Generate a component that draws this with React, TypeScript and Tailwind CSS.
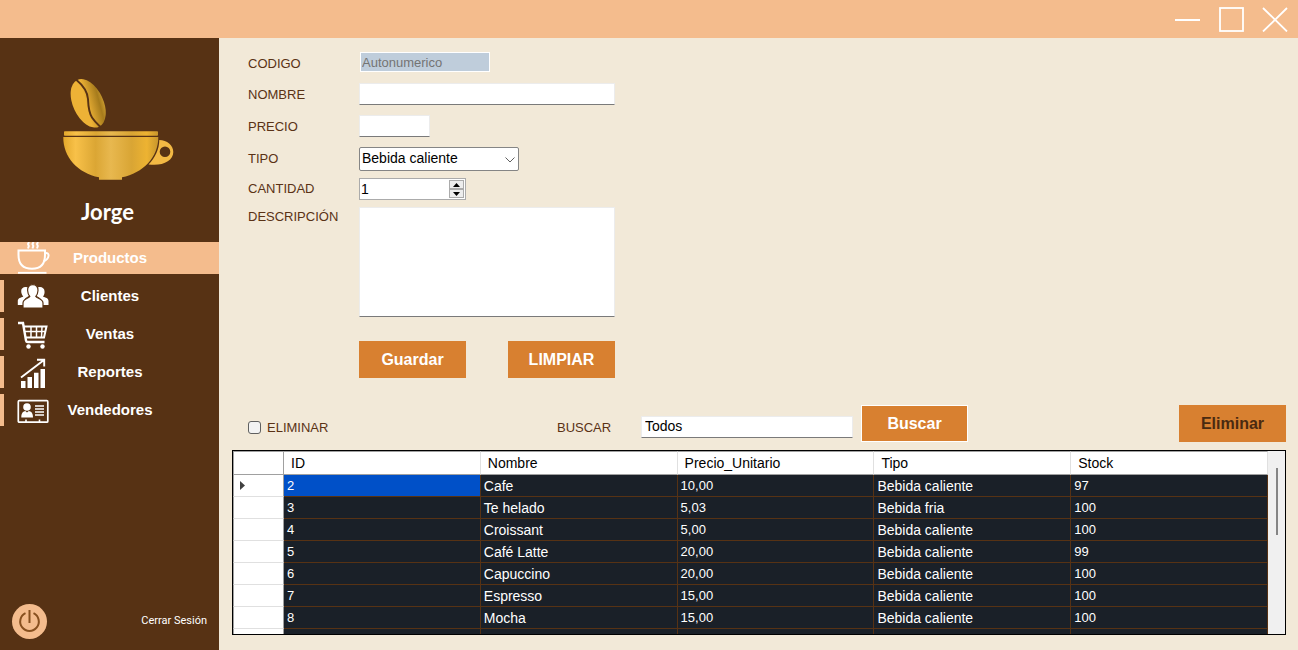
import React, { useState } from "react";

type Product = {
  id: string;
  nombre: string;
  precio: string;
  tipo: string;
  stock: string;
};

const products: Product[] = [
  { id: "2", nombre: "Cafe", precio: "10,00", tipo: "Bebida caliente", stock: "97" },
  { id: "3", nombre: "Te helado", precio: "5,03", tipo: "Bebida fria", stock: "100" },
  { id: "4", nombre: "Croissant", precio: "5,00", tipo: "Bebida caliente", stock: "100" },
  { id: "5", nombre: "Café Latte", precio: "20,00", tipo: "Bebida caliente", stock: "99" },
  { id: "6", nombre: "Capuccino", precio: "20,00", tipo: "Bebida caliente", stock: "100" },
  { id: "7", nombre: "Espresso", precio: "15,00", tipo: "Bebida caliente", stock: "100" },
  { id: "8", nombre: "Mocha", precio: "15,00", tipo: "Bebida caliente", stock: "100" },
  { id: "", nombre: "", precio: "", tipo: "", stock: "" },
];

const columns = ["ID", "Nombre", "Precio_Unitario", "Tipo", "Stock"];

function Logo() {
  return (
    <svg viewBox="60 75 116 108" className="h-[108px] w-[116px]" aria-hidden="true">
      <defs>
        <linearGradient id="cup" x1="0" x2="1" y1="0" y2="0">
          <stop offset="0" stopColor="#e3a82c" />
          <stop offset="0.13" stopColor="#f8c149" />
          <stop offset="0.34" stopColor="#dba634" />
          <stop offset="0.5" stopColor="#e8b84f" />
          <stop offset="0.72" stopColor="#d9a534" />
          <stop offset="0.88" stopColor="#edb332" />
          <stop offset="1" stopColor="#c8962c" />
        </linearGradient>
        <linearGradient id="bean" x1="0" x2="1" y1="0.3" y2="0.6">
          <stop offset="0.45" stopColor="#edb236" />
          <stop offset="0.85" stopColor="#a67b1c" />
          <stop offset="1" stopColor="#c99a2e" />
        </linearGradient>
      </defs>
      <ellipse cx="88.2" cy="103.3" rx="15.2" ry="25.800" transform="rotate(-25 88.2 103.3)" fill="url(#bean)" />
      <path d="M76 79.500C82 84.500 87.500 91.500 88 99C88.300 106 88.500 112 92 117.500C95 122 98 124.500 101 127.500" fill="none" stroke="#573214" strokeWidth="1.900" />
      <rect x="64" y="131.300" width="94" height="4.400" rx="0.800" fill="url(#cup)" />
      <path d="M63.300 136.900H158.300C158.500 157 143 173 122 177.300V179.800H99V177.300C78 173 63 157 63.300 136.900Z" fill="url(#cup)" />
      <path fillRule="evenodd" d="M159.300 140C167 140 173.300 145 173.300 152C173.300 161 162 166.500 148.500 164.400C155 158 159.300 149 159.300 140ZM170.300 151.700A5.300 5.300 0 1 0 159.700 151.700A5.300 5.300 0 1 0 170.300 151.700Z" fill="#f3b944" />
    </svg>
  );
}

function Icon({ children }: { children: React.ReactNode }) {
  return (
    <svg viewBox="0 0 34 34" className="h-[34px] w-[34px] shrink-0" fill="none" stroke="#fff" aria-hidden="true">
      {children}
    </svg>
  );
}

const CoffeeIcon = () => (
  <Icon>
    <path d="M1.500 9.500H28V14C28 23 23.500 27.800 15 27.800S1.500 23 1.500 14Z" strokeWidth="2" />
    <path d="M28 12C33 11 33 17.500 26.500 20.500" strokeWidth="2" />
    <path d="M1 31.800H29.500" strokeWidth="1.800" />
    <path d="M12 1L11 3L11.800 5L11 7.500M16.500 1L15.500 3L16.300 5L15.500 7.500M21 1L20 3L20.800 5L20 7.500" strokeWidth="2" />
  </Icon>
);

const PeopleIcon = () => (
  <Icon>
    <g fill="#fff" stroke="none">
      <path d="M8.500 8C11 7.800 11.800 9 11.500 11C11.300 13 11.700 15 12.500 16.500C10 18 7 19.500 6 22.800V26H0.800V22C0.800 19 4 18.800 6.300 17.500C4.800 15.800 4.200 14 4.200 12C4.200 9.500 6 8.200 8.500 8Z" />
      <path d="M23 8C20.500 7.800 19.700 9 20 11C20.200 13 19.800 15 19 16.500C21.500 18 24.500 19.500 25.500 22.800V26H31.500V22C31.500 19 28.500 18.800 26 17.500C27.500 15.800 27.700 14 27.500 12C27.300 9.500 25.500 8.200 23 8Z" />
      <path d="M15.800 5.600C19.300 5.600 21.200 8 21 11.500C20.800 14.500 19.800 16.500 18.800 17.500C20.300 19.500 26 19.700 26 24V29H6V24C6 19.700 11.300 19.500 12.800 17.500C11.800 16.500 10.800 14.500 10.600 11.500C10.400 8 12.300 5.600 15.800 5.600Z" stroke="#573214" strokeWidth="1.200" />
    </g>
  </Icon>
);

const CartIcon = () => (
  <Icon>
    <path d="M1 6H6L9 23.500C9.200 24.800 9.800 25 11 25H27.500" strokeWidth="2.400" />
    <path d="M6.800 9.500H29.500L27 20.500H9" strokeWidth="2" />
    <path d="M8 14.500H28.500M14 9.500V20M19.500 9.500V20M25 9.500L24.500 20" strokeWidth="1.500" />
    <circle cx="11.500" cy="29.500" r="2.200" fill="#fff" stroke="none" />
    <circle cx="25.500" cy="29.500" r="2.200" fill="#fff" stroke="none" />
  </Icon>
);

const ReportIcon = () => (
  <Icon>
    <path d="M4 26H8.500V33H4ZM10.500 22H15V33H10.500ZM17 17.800H21.500V33H17ZM23.500 14H28V33H23.500Z" fill="#fff" stroke="none" />
    <path d="M4 22.500L27 5M20 4.700H27.200V11.500" strokeWidth="1.900" />
  </Icon>
);

const CardIcon = () => (
  <Icon>
    <rect x="1.300" y="7.700" width="29.500" height="21.500" rx="1" strokeWidth="1.700" />
    <path d="M9 29V26.500M22.500 29V26.500" strokeWidth="1.600" />
    <path d="M18 13H27M18 16H27M18 19H27M18 22H27" strokeWidth="1.300" />
    <circle cx="10" cy="14" r="3.800" fill="#fff" stroke="none" />
    <path d="M4.300 24.500C4.300 19.500 6.300 18.500 8.300 18L10 19.500L11.800 18C14 18.500 16 19.500 16 24.500Z" fill="#fff" stroke="none" />
  </Icon>
);

const nav = [
  { label: "Productos", icon: CoffeeIcon },
  { label: "Clientes", icon: PeopleIcon },
  { label: "Ventas", icon: CartIcon },
  { label: "Reportes", icon: ReportIcon },
  { label: "Vendedores", icon: CardIcon },
];

function Sidebar() {
  return (
    <aside className="flex w-[219px] shrink-0 flex-col bg-[#573214] text-white">
      <div className="flex flex-col items-center pt-[37px] pr-1">
        <div className="pl-5">
          <Logo />
        </div>
        <p className="mt-3.5 text-center font-['Lato','Liberation_Sans',sans-serif] text-[22px] leading-[30px] font-bold">Jorge</p>
      </div>
      <nav className="mt-[15px] flex flex-col gap-1.5">
        {nav.map(({ label, icon: NavIcon }, i) => (
          <a
            key={label}
            href={"#" + label.toLowerCase()}
            className={
              i === 0
                ? "flex h-8 items-center overflow-hidden border-l-4 border-[#f4bc8d] bg-[#f4bc8d] pl-[13px]"
                : "flex h-8 items-center border-l-4 border-[#f4bc8d] pl-[13px]"
            }
          >
            <NavIcon />
            <span className="w-[118px] text-center text-[15px] leading-5 font-bold">{label}</span>
          </a>
        ))}
      </nav>
      <div className="mt-auto flex items-center justify-between px-3 pb-[11px]">
        <button type="button" aria-label="Salir" className="h-[35px] w-[35px] rounded-full bg-[#f4bc8d]">
          <svg viewBox="0 0 35 35" fill="none" stroke="#87501f" strokeWidth="2" aria-hidden="true">
            <path d="M17.500 6V19" />
            <path d="M13.500 9.200A9.300 9.300 0 1 0 21.500 9.200" />
          </svg>
        </button>
        <span className="pb-0.5 font-['Roboto','Liberation_Sans',sans-serif] text-[11px] leading-4">Cerrar Sesión</span>
      </div>
    </aside>
  );
}

function ProductForm() {
  const [qty, setQty] = useState(1);
  const label = "w-[111px] shrink-0 pt-0.5 text-[13px] leading-4";
  const input =
    "h-[22px] border border-[#ececec] border-b-[#7a7a7a] bg-white px-1 text-sm text-black outline-none";
  return (
    <form className="flex flex-col gap-[7px] pl-4" onSubmit={(e) => e.preventDefault()}>
      <div className="flex flex-col gap-2.5">
        <div className="flex h-[22px] items-center">
          <label htmlFor="codigo" className="w-[111px] shrink-0 pt-1 text-[13px] leading-4">CODIGO</label>
          <input
            id="codigo"
            disabled
            placeholder="Autonumerico"
            className="ml-px h-5 w-[130px] border border-white bg-[#bfcddb] px-px text-[13px] placeholder:text-[#747474]"
          />
        </div>
        <div className="flex items-center">
          <label htmlFor="nombre" className={label}>NOMBRE</label>
          <input id="nombre" className={input + " w-64"} />
        </div>
        <div className="flex items-center">
          <label htmlFor="precio" className={label}>PRECIO</label>
          <input id="precio" className={input + " w-[71px]"} />
        </div>
        <div className="flex items-center">
          <label htmlFor="tipo" className="w-[111px] shrink-0 text-[13px] leading-4">TIPO</label>
          <div className="relative">
            <select
              id="tipo"
              className="block h-6 w-40 appearance-none rounded-xs border border-[#858585] bg-white px-0.5 pb-0.5 text-sm leading-5 text-black outline-none"
            >
              <option>Bebida caliente</option>
              <option>Bebida fria</option>
            </select>
            <svg viewBox="0 0 10 6" className="pointer-events-none absolute top-2.5 right-1 h-1.5 w-2.5" fill="none" stroke="#606060" aria-hidden="true">
              <path d="M0.500 0.500L5 5L9.500 0.500" />
            </svg>
          </div>
        </div>
      </div>
      <div className="flex items-center">
        <label htmlFor="cantidad" className="w-[111px] shrink-0 text-[13px] leading-4">CANTIDAD</label>
        <div className="flex h-[22px] w-[107px] border border-[#ababab] bg-white">
          <input
            id="cantidad"
            type="number"
            value={qty}
            onChange={(e) => setQty(Number(e.target.value))}
            className="min-w-0 flex-1 appearance-none px-px pb-px text-sm text-black outline-none [appearance:textfield]"
          />
          <div className="my-px mr-px flex w-[15px] flex-col">
            <button
              type="button"
              aria-label="Aumentar"
              onClick={() => setQty(qty + 1)}
              className="flex flex-1 items-center justify-center border border-[#ababab] bg-[#ededed]"
            >
              <svg viewBox="0 0 7 4" className="h-1 w-[7px]" aria-hidden="true"><path d="M0 4L3.500 0L7 4Z" /></svg>
            </button>
            <button
              type="button"
              aria-label="Disminuir"
              onClick={() => setQty(qty - 1)}
              className="flex flex-1 items-center justify-center border border-[#ababab] bg-[#ededed]"
            >
              <svg viewBox="0 0 7 4" className="h-1 w-[7px]" aria-hidden="true"><path d="M0 0L3.500 4L7 0Z" /></svg>
            </button>
          </div>
        </div>
      </div>
      <div className="flex items-start">
        <label htmlFor="descripcion" className={label}>DESCRIPCIÓN</label>
        <textarea
          id="descripcion"
          className="h-[110px] w-64 resize-none border border-[#ececec] border-b-[#7a7a7a] bg-white p-1 text-sm text-black outline-none"
        />
      </div>
      <div className="mt-[17px] flex gap-[42px] pl-[111px]">
        <button type="submit" className="h-[37px] w-[107px] bg-[#d88030] text-base font-bold text-white">Guardar</button>
        <button type="reset" className="h-[37px] w-[107px] bg-[#d88030] text-base font-bold text-white">LIMPIAR</button>
      </div>
    </form>
  );
}

function Toolbar() {
  return (
    <div className="mt-[27px] flex h-[37px] shrink-0 items-center pl-4 text-[13px] leading-4">
      <label className="flex w-[309px] items-center gap-1.5 pt-2">
        <input type="checkbox" className="h-[13px] w-[13px] appearance-none rounded-[3px] border border-[#606060] bg-[#f3f3f3] checked:bg-[#606060]" />
        ELIMINAR
      </label>
      <label htmlFor="buscar" className="w-[84px] pt-2">BUSCAR</label>
      <input
        id="buscar"
        defaultValue="Todos"
        className="mt-1.5 h-[22px] w-[212px] border border-[#ececec] border-b-[#7a7a7a] bg-white px-[3px] pb-px text-sm text-black outline-none"
      />
      <button type="button" className="ml-2 h-[37px] w-[107px] border border-white bg-[#d88030] text-base font-bold text-white">Buscar</button>
      <button type="button" className="ml-auto h-[37px] w-[107px] bg-[#d88030] text-base font-bold text-[#4a2a10]">Eliminar</button>
    </div>
  );
}

function ProductTable() {
  const cell = "h-[22px] border-r border-b border-[#573214] px-[3px] text-sm leading-5";
  const numeric = "h-[22px] border-r border-b border-[#573214] px-[3px] text-[13px] leading-5";
  return (
    <div className="mt-2 flex min-h-0 flex-1 overflow-hidden border border-black bg-[#f0f0f0]">
      <div className="min-w-0 flex-1 overflow-hidden">
        <table className="w-full table-fixed border-separate border-spacing-0 text-white">
          <thead>
            <tr className="bg-white text-sm leading-5 text-black">
              <th className="h-6 w-[51px] border border-[#a0a0a0] p-0" aria-label="Fila" />
              {columns.map((name) => (
                <th key={name} className="h-6 border-t border-r border-b border-t-[#a0a0a0] border-r-[#e0e0e0] border-b-[#a0a0a0] px-[7px] py-0 text-left font-normal">
                  {name}
                </th>
              ))}
            </tr>
          </thead>
          <tbody>
            {products.map((p, i) => (
              <tr key={i} className="bg-[#1a2028]">
                <td className="h-[22px] border-r border-b border-l border-r-[#a0a0a0] border-b-[#e0e0e0] border-l-[#a0a0a0] bg-white p-0 pl-1.5">
                  {i === 0 && (
                    <svg viewBox="0 0 5 9" className="h-[9px] w-[5px]" fill="#404040" aria-hidden="true">
                      <path d="M0 0L5 4.500L0 9Z" />
                    </svg>
                  )}
                </td>
                <td className={i === 0 ? numeric + " bg-[#0050c8]" : numeric}>{p.id}</td>
                <td className={cell}>{p.nombre}</td>
                <td className={numeric}>{p.precio}</td>
                <td className={cell}>{p.tipo}</td>
                <td className={numeric}>{p.stock}</td>
              </tr>
            ))}
          </tbody>
        </table>
      </div>
      <div className="flex w-[17px] shrink-0 justify-center pt-[17px]">
        <div className="h-[67px] w-0.5 bg-[#858585]" />
      </div>
    </div>
  );
}

export default function App() {
  return (
    <div className="flex h-screen flex-col bg-[#f2e9d8] font-['Liberation_Sans',Arial,sans-serif] text-[#5a3215]">
      <header className="flex h-[38px] shrink-0 items-center justify-end gap-[18px] bg-[#f4bc8d] pr-[10px]">
        <button type="button" aria-label="Minimizar">
          <svg viewBox="0 0 26 26" className="h-[26px] w-[26px]" stroke="#fff" strokeWidth="2" aria-hidden="true"><path d="M1 14H26" /></svg>
        </button>
        <button type="button" aria-label="Maximizar">
          <svg viewBox="0 0 26 26" className="h-[26px] w-[26px]" fill="none" stroke="#fff" strokeWidth="1.800" aria-hidden="true"><rect x="2" y="2" width="23" height="23" /></svg>
        </button>
        <button type="button" aria-label="Cerrar">
          <svg viewBox="0 0 26 26" className="h-[26px] w-[26px]" stroke="#fff" strokeWidth="1.800" aria-hidden="true"><path d="M1 2L25 25.500M25 2L1 25.500" /></svg>
        </button>
      </header>
      <div className="flex min-h-0 flex-1">
        <Sidebar />
        <main className="flex min-w-0 flex-1 flex-col pt-[13px] pr-3 pb-[15px] pl-[13px]">
          <ProductForm />
          <Toolbar />
          <ProductTable />
        </main>
      </div>
    </div>
  );
}
